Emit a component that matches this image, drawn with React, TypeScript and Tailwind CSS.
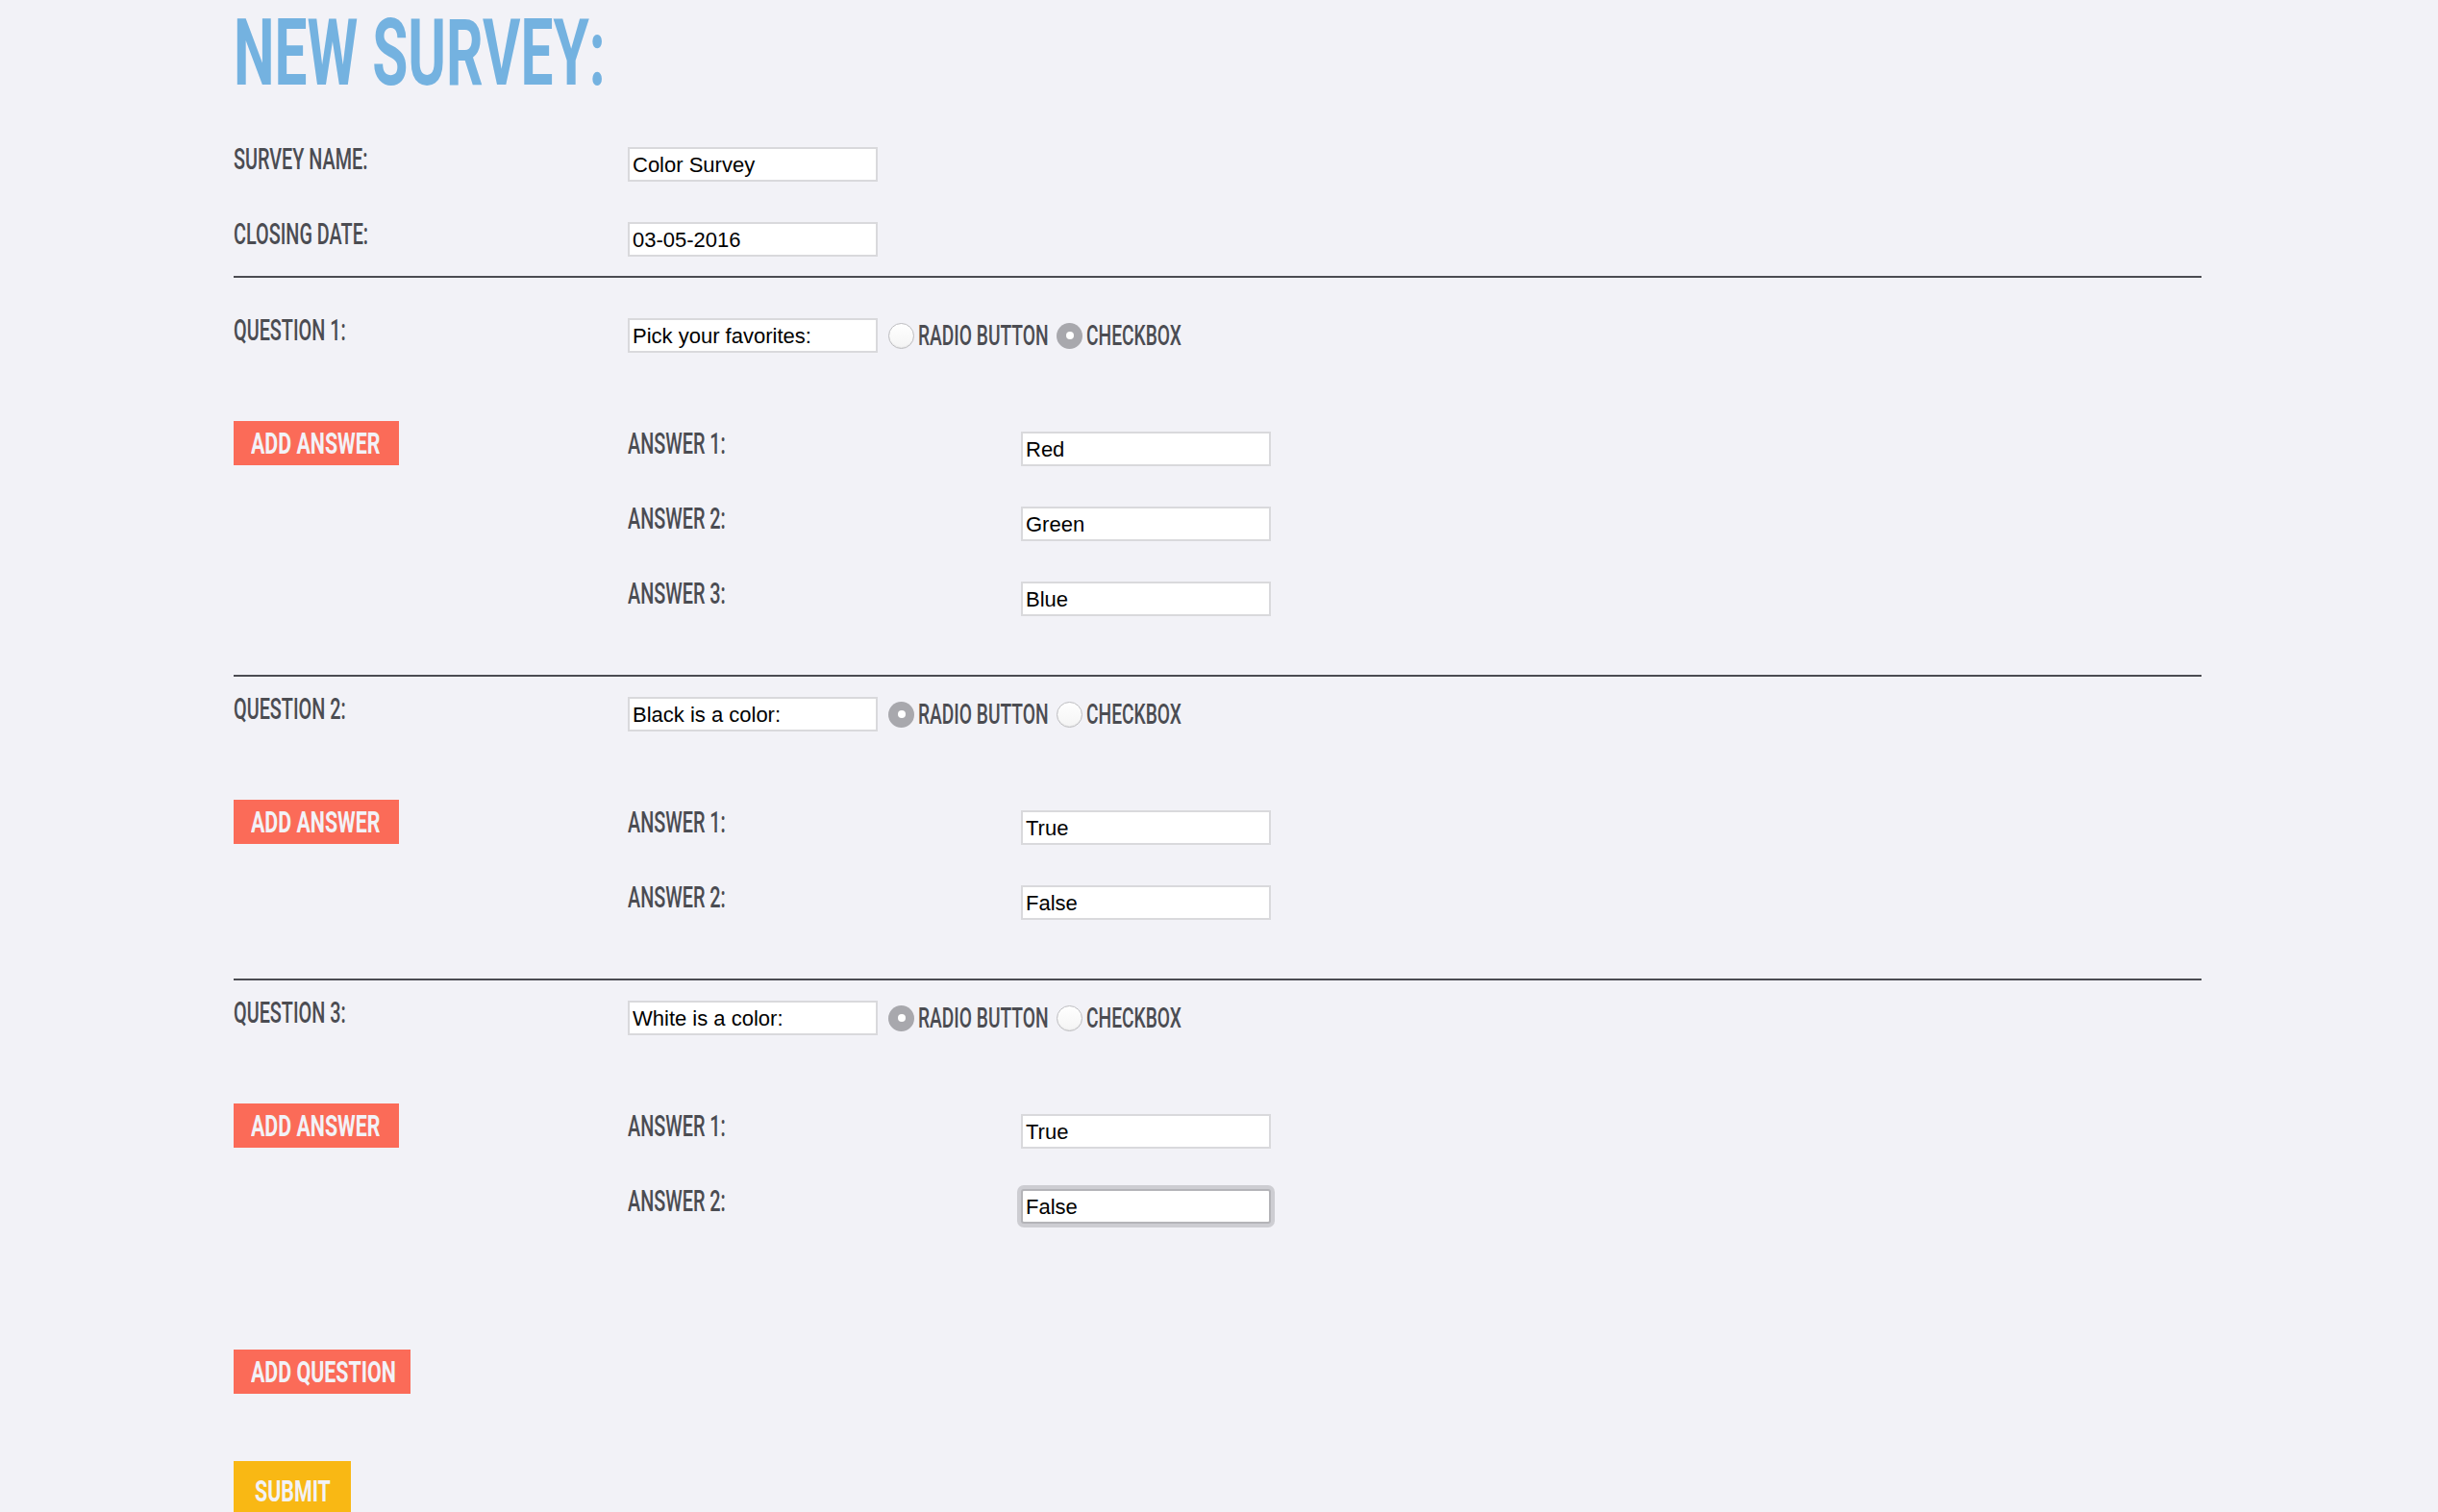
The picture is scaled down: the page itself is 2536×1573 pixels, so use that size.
import React, { useEffect, useRef } from 'react';

type Question = {
  text: string;
  type: 'radio' | 'checkbox';
  answers: string[];
};

const questions: Question[] = [
  { text: 'Pick your favorites:', type: 'checkbox', answers: ['Red', 'Green', 'Blue'] },
  { text: 'Black is a color:', type: 'radio', answers: ['True', 'False'] },
  { text: 'White is a color:', type: 'radio', answers: ['True', 'False'] },
];

const inputCls =
  "h-[36px] w-[260px] shrink-0 border-2 border-[#d9d9dc] bg-white px-[3px] pt-[2px] font-['Liberation_Sans',Arial,sans-serif] text-[22px] text-black outline-none";

const Label = ({ children }: { children: React.ReactNode }) => (
  <span className="inline-block origin-left whitespace-nowrap font-['Roboto',sans-serif] text-[31px] font-medium leading-[24px] text-[#4b4c52] [transform:scaleX(0.64)]">
    {children}
  </span>
);

const Radio = ({ checked }: { checked: boolean }) =>
  checked ? (
    <span className="flex h-[27px] w-[27px] shrink-0 items-center justify-center rounded-full bg-[#a8a8ad]">
      <span className="block h-[8px] w-[8px] rounded-full bg-white" />
    </span>
  ) : (
    <span className="block h-[27px] w-[27px] shrink-0 rounded-full border border-[#bdbdc0] bg-gradient-to-b from-white to-[#f4f4f4] shadow-[inset_0_-1px_1px_rgba(0,0,0,0.06)]" />
  );

const RadioText = ({ children, width }: { children: React.ReactNode; width: string }) => (
  <span className={width}>
    <span className="inline-block origin-left whitespace-nowrap font-['Roboto',sans-serif] text-[30px] font-medium leading-none text-[#4b4c52] [transform:scaleX(0.64)]">
      {children}
    </span>
  </span>
);

const Button = ({ children, className }: { children: React.ReactNode; className: string }) => (
  <button type="button" className={`flex items-center ${className}`}>
    <span className="inline-block origin-left whitespace-nowrap font-['Roboto',sans-serif] text-[31px] font-bold leading-none text-[#f2f2f7] [transform:scaleX(0.69)]">
      {children}
    </span>
  </button>
);

export default function App() {
  const focusRef = useRef<HTMLInputElement>(null);

  useEffect(() => {
    const el = focusRef.current;
    if (el) {
      el.focus();
      el.setSelectionRange(el.value.length, el.value.length);
    }
  }, []);

  return (
    <div className="h-screen overflow-hidden bg-[#f2f2f7]">
      <div className="pl-[243px] pr-[246px] pt-[7px]">
        <h1 className="h-[96px]">
          <span className="inline-block origin-left whitespace-nowrap font-['Roboto',sans-serif] text-[96px] font-bold leading-none text-[#74b2e0] [transform:scaleX(0.628)]">
            NEW SURVEY:
          </span>
        </h1>

        <div className="mt-[50px] flex flex-col gap-[42px]">
          <div className="flex items-start">
            <div className="w-[410px] shrink-0 pt-[1px]">
              <Label>SURVEY NAME:</Label>
            </div>
            <input className={inputCls} defaultValue="Color Survey" />
          </div>
          <div className="flex items-start">
            <div className="w-[410px] shrink-0 pt-[1px]">
              <Label>CLOSING DATE:</Label>
            </div>
            <input className={inputCls} defaultValue="03-05-2016" />
          </div>
        </div>

        <div className="mt-[20px]">
          {questions.map((q, qi) => (
            <div
              key={qi}
              className={`border-t-2 border-[#4b4c52] pb-[61px] ${qi === 0 ? 'pt-[42px]' : 'pt-[21px]'}`}
            >
              <div className="flex items-start">
                <div className="w-[410px] shrink-0 pt-[1px]">
                  <Label>QUESTION {qi + 1}:</Label>
                </div>
                <input className={inputCls} defaultValue={q.text} />
                <div className="ml-[11px] flex h-[36px] items-center">
                  <Radio checked={q.type === 'radio'} />
                  <span className="ml-[4px] flex">
                    <RadioText width="w-[133px]">RADIO BUTTON</RadioText>
                  </span>
                  <span className="ml-[11px] flex">
                    <Radio checked={q.type === 'checkbox'} />
                  </span>
                  <span className="ml-[4px] flex">
                    <RadioText width="w-[100px]">CHECKBOX</RadioText>
                  </span>
                </div>
              </div>

              <div className="mt-[71px] flex items-start">
                <div className="w-[410px] shrink-0">
                  <Button className="h-[46px] w-[172px] bg-[#fb6b58] pl-[18px]">ADD ANSWER</Button>
                </div>
                <div className="flex flex-col gap-[42px] pt-[11px]">
                  {q.answers.map((a, ai) => {
                    const focused = qi === questions.length - 1 && ai === q.answers.length - 1;
                    return (
                      <div key={ai} className="flex items-start">
                        <div className="w-[409px] shrink-0 pt-[1px]">
                          <Label>ANSWER {ai + 1}:</Label>
                        </div>
                        {focused ? (
                          <input
                            ref={focusRef}
                            className="h-[36px] w-[260px] shrink-0 rounded-[3px] border-2 border-[#b4b4b8] bg-white px-[3px] pt-[2px] font-['Liberation_Sans',Arial,sans-serif] text-[22px] text-black caret-black shadow-[0_0_0_4px_#cdcdd2] outline-none"
                            defaultValue={a}
                          />
                        ) : (
                          <input className={inputCls} defaultValue={a} />
                        )}
                      </div>
                    );
                  })}
                </div>
              </div>
            </div>
          ))}
        </div>

        <Button className="mt-[70px] h-[46px] w-[184px] bg-[#fb6b58] pl-[18px]">ADD QUESTION</Button>

        <Button className="mt-[70px] h-[62px] w-[122px] bg-[#f9b814] pl-[22px]">SUBMIT</Button>
      </div>
    </div>
  );
}
